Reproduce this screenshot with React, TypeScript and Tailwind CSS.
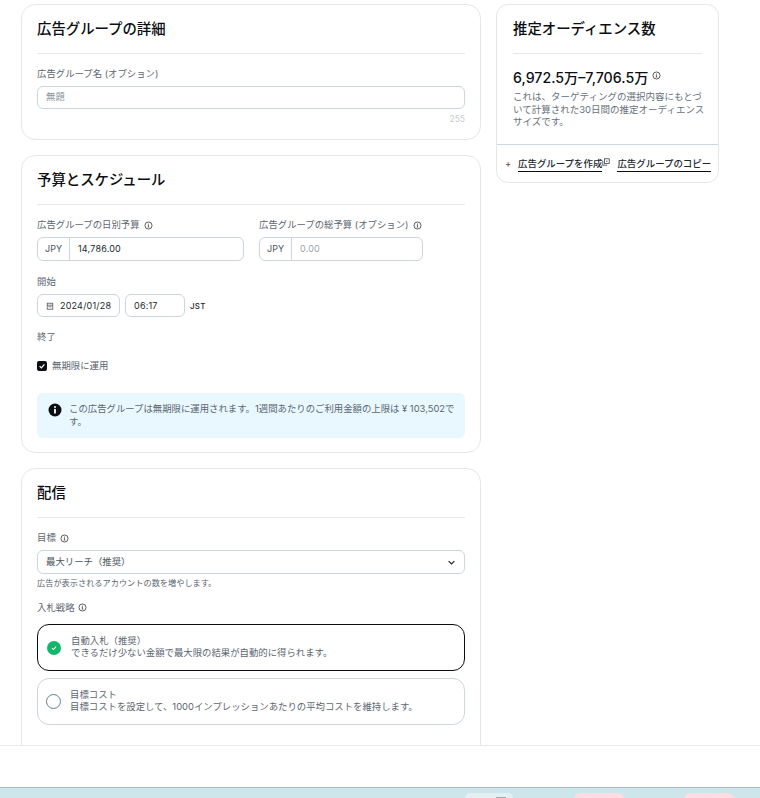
const font = "font-['Inter','Noto_Sans_CJK_JP',sans-serif]";

function InfoIcon({ className }: { className?: string }) {
  return (
    <svg viewBox="0 0 16 16" className={className} fill="none" stroke="currentColor" strokeWidth="1.4">
      <circle cx="8" cy="8" r="6.3" />
      <path d="M6.6 7.4H8v3.4M6.6 10.8h2.9" strokeWidth="1.2" />
      <circle cx="8" cy="5.2" r="0.9" fill="currentColor" stroke="none" />
    </svg>
  );
}

function Label({ children, info }: { children: string; info?: boolean }) {
  return (
    <div className="flex items-center gap-[4px] text-[9.4px] leading-[14px] text-[#5c6670]">
      <span>{children}</span>
      {info && <InfoIcon className="h-[9px] w-[9px] text-[#333]" />}
    </div>
  );
}

function Card({ title, children, className }: { title: string; children: React.ReactNode; className?: string }) {
  return (
    <section className={`rounded-[14px] border border-[#e3e8ea] bg-white px-[15px] ${className ?? ""}`}>
      <h2 className="h-[49px] border-b border-[#e5e9ec] pt-[12px] text-[14.4px] leading-[24px] font-medium text-[#0b0d12]">{title}</h2>
      {children}
    </section>
  );
}

function MoneyInput({ value, className, muted }: { value: string; className: string; muted?: boolean }) {
  return (
    <div className={`flex h-6 items-center rounded-[6px] border border-[#ccd6dd] text-[9px] ${className}`}>
      <span className="flex h-full w-8 items-center justify-center border-r border-[#ccd6dd] text-[#4a5560]">JPY</span>
      <span className={`pl-2 tracking-[0.2px] ${muted ? "text-[#9aa5ad]" : "text-[#22282e]"}`}>{value}</span>
    </div>
  );
}

function RadioOption({ selected, title, text }: { selected?: boolean; title: string; text: string }) {
  return (
    <div className={`flex h-[47px] items-center rounded-[12px] border bg-white pl-2 ${selected ? "border-[#0b0d12]" : "border-[#ccd6dd]"}`}>
      {selected ? (
        <span className="ml-px flex h-[14px] w-[14px] items-center justify-center rounded-full bg-[#12b76a]">
          <svg viewBox="0 0 10 10" className="h-2 w-2" fill="none" stroke="white" strokeWidth="1.3">
            <path d="M2.5 5.2 4.3 7l3.2-3.8" />
          </svg>
        </span>
      ) : (
        <span className="h-[15px] w-[15px] rounded-full border border-[#5f7f96]" />
      )}
      <div className={`mb-[1px] text-[9.4px] leading-[12.5px] text-[#5c6670] ${selected ? "ml-[10px]" : "ml-[9px]"}`}>
        <div>{title}</div>
        <div>{text}</div>
      </div>
    </div>
  );
}

export default function App() {
  return (
    <div className={`flex h-[798px] w-[760px] flex-col overflow-hidden bg-white ${font}`}>
      <main className="flex h-[745px] shrink-0 items-start gap-[15px] overflow-hidden pl-[21px] pt-1">
        <div className="flex w-[460px] shrink-0 flex-col gap-[15px]">
          <Card title="広告グループの詳細" className="h-[136px]">
            <div className="mt-[13px]">
              <Label>広告グループ名 (オプション)</Label>
            </div>
            <div className="mt-[5px] flex h-[23px] items-center rounded-[6px] border border-[#ccd6dd] pl-2 text-[9.4px] text-[#8b959d]">無題</div>
            <div className="mt-1 text-right text-[8.5px] leading-[12px] text-[#c4cdd3]">255</div>
          </Card>

          <Card title="予算とスケジュール" className="h-[298px]">
            <div className="mt-[13px] flex gap-[15px]">
              <div>
                <Label info>広告グループの日別予算</Label>
                <MoneyInput value="14,786.00" className="mt-[5px] w-[207px]" />
              </div>
              <div>
                <Label info>広告グループの総予算 (オプション)</Label>
                <MoneyInput value="0.00" muted className="mt-[5px] w-[164px]" />
              </div>
            </div>

            <div className="mt-[14px]">
              <Label>開始</Label>
            </div>
            <div className="mt-[5px] flex items-center gap-[5px] text-[9px] tracking-[0.2px] text-[#22282e]">
              <div className="flex h-[23px] w-[83px] items-center gap-[6px] rounded-[6px] border border-[#ccd6dd] pl-[8px]">
                <svg viewBox="0 0 10 10" className="h-2 w-2 text-[#444]" fill="none" stroke="currentColor" strokeWidth="0.9">
                  <rect x="1.5" y="1.5" width="7" height="7.5" />
                  <path d="M1.5 4h7M3 6h4" />
                </svg>
                <span>2024/01/28</span>
              </div>
              <div className="flex h-[23px] w-[60px] items-center rounded-[6px] border border-[#ccd6dd] pl-2">06:17</div>
              <span className="text-[8px] font-medium">JST</span>
            </div>

            <div className="mt-[13px]">
              <Label>終了</Label>
            </div>
            <div className="mt-[15px] flex items-center gap-[5px] text-[9.4px] leading-[14px] text-[#5c6670]">
              <span className="flex h-[10px] w-[10px] items-center justify-center rounded-[2px] bg-[#0b0d12]">
                <svg viewBox="0 0 10 10" className="h-2 w-2" fill="none" stroke="white" strokeWidth="1.5">
                  <path d="M2 5.2 4.2 7.3 8 2.9" />
                </svg>
              </span>
              <span>無期限に運用</span>
            </div>

            <div className="mt-[20px] flex h-[45px] items-start gap-[7px] rounded-[6px] bg-[#e8f8fe] pl-[11px] pr-2 pt-[9px]">
              <svg viewBox="0 0 14 14" className="mt-px h-[14px] w-[14px] shrink-0">
                <circle cx="7" cy="7" r="6.5" fill="#0b0d12" />
                <circle cx="7" cy="4" r="1" fill="white" />
                <rect x="6.1" y="5.9" width="1.8" height="4.6" fill="white" />
              </svg>
              <p className="text-[9.4px] leading-[13px] text-[#5c6670]">
                この広告グループは無期限に運用されます。1週間あたりのご利用金額の上限は ¥ 103,502です。
              </p>
            </div>
          </Card>

          <Card title="配信" className="h-[300px]">
            <div className="mt-[13px]">
              <Label info>目標</Label>
            </div>
            <div className="mt-[5px] flex h-6 items-center justify-between rounded-[6px] border border-[#ccd6dd] pl-2 pr-[8px] text-[9.4px] text-[#4a5560]">
              <span>最大リーチ（推奨）</span>
              <svg viewBox="0 0 10 10" className="h-[9px] w-[9px]" fill="none" stroke="#22282e" strokeWidth="1.4">
                <path d="M1.8 3.5 5 6.5l3.2-3" />
              </svg>
            </div>
            <p className="mt-[3px] text-[8.2px] leading-[12px] text-[#5c6670]">広告が表示されるアカウントの数を増やします。</p>
            <div className="mt-[12px] flex items-center gap-[3px] text-[9.4px] leading-[14px] text-[#5c6670]">
              <span>入札戦略</span>
              <InfoIcon className="mb-[2px] h-[9px] w-[9px] text-[#333]" />
            </div>
            <div className="mt-[9px] flex flex-col gap-[7px]">
              <RadioOption selected title="自動入札（推奨）" text="できるだけ少ない金額で最大限の結果が自動的に得られます。" />
              <RadioOption title="目標コスト" text="目標コストを設定して、1000インプレッションあたりの平均コストを維持します。" />
            </div>
          </Card>
        </div>

        <aside className="w-[223px] shrink-0 rounded-[12px] border border-[#e3e8ea] bg-white">
          <div className="mx-4 h-[49px] border-b border-[#e5e9ec] pt-[12px] text-[14.4px] leading-[24px] font-medium text-[#0b0d12]">推定オーディエンス数</div>
          <div className="mt-[15px] flex items-start gap-1 px-4">
            <span className="text-[14.2px] leading-[18px] font-medium text-[#0b0d12]">6,972.5万–7,706.5万</span>
            <InfoIcon className="mt-[2px] h-[9px] w-[9px] text-[#333]" />
          </div>
          <p className="mt-1 pl-4 pr-[12px] text-[9.5px] leading-[12.5px] text-[#66717a]">
            これは、ターゲティングの選択内容にもとづいて計算された30日間の推定オーディエンスサイズです。
          </p>
          <div className="mt-[15px] flex h-[38px] items-start border-t border-[#ccd6dd] pl-[8px] pt-[12px] text-[9.45px] leading-[13px] font-medium text-[#22282e]">
            <span className="mr-[6px] w-[7px] text-[#7a4a3a]">+</span>
            <span className="border-b border-[#0b0d12] pb-[1px]">広告グループを作成</span>
            <svg viewBox="0 0 10 10" className="mt-[1px] h-2 w-2 shrink-0" fill="none" stroke="#22282e" strokeWidth="0.9">
              <rect x="3" y="1" width="6" height="6" />
              <path d="M1 3.5V9h5.5M5 4h2" />
            </svg>
            <span className="ml-[7px] border-b border-[#0b0d12] pb-[1px]">広告グループのコピー</span>
          </div>
        </aside>
      </main>

      <div className="h-[42px] shrink-0 border-t border-[#e7e9eb] bg-white" />

      <div className="flex h-[11px] shrink-0 items-start border-t border-[#a9bfc5] bg-[#cde6ec] pt-[5px]">
        <div className="ml-[465px] flex h-[6px] w-[48px] items-end justify-end rounded-t-[5px] bg-[#e2f0f3] pr-[7px]">
          <div className="h-[2px] w-[10px] bg-[#9aa5ad]" />
        </div>
        <div className="ml-[61px] h-[6px] w-[50px] rounded-t-[6px] bg-[#fbdde2]" />
        <div className="ml-[60px] h-[6px] w-[50px] rounded-t-[6px] bg-[#fbdde2]" />
      </div>
    </div>
  );
}
